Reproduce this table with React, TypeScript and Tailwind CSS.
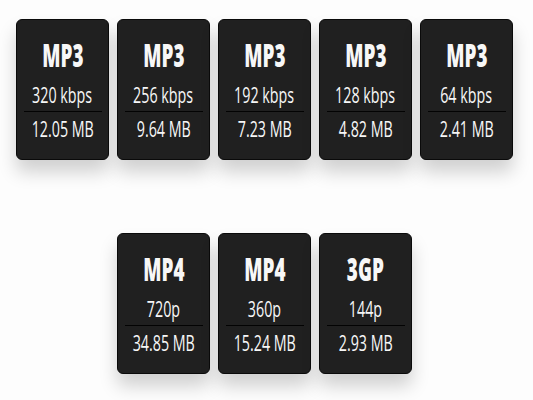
import React from 'react';

interface Format {
  type: string;
  quality: string;
  size: string;
}

const audio: Format[] = [
  { type: 'MP3', quality: '320 kbps', size: '12.05 MB' },
  { type: 'MP3', quality: '256 kbps', size: '9.64 MB' },
  { type: 'MP3', quality: '192 kbps', size: '7.23 MB' },
  { type: 'MP3', quality: '128 kbps', size: '4.82 MB' },
  { type: 'MP3', quality: '64 kbps', size: '2.41 MB' },
];

const video: Format[] = [
  { type: 'MP4', quality: '720p', size: '34.85 MB' },
  { type: 'MP4', quality: '360p', size: '15.24 MB' },
  { type: '3GP', quality: '144p', size: '2.93 MB' },
];

const FormatCard: React.FC<{ f: Format }> = ({ f }) => (
  <div className="w-[93px] h-[141px] bg-[#202020] border border-[#0a0a0a] rounded-[6px] shadow-[0_12px_18px_rgba(0,0,0,0.18)] flex flex-col items-center text-[#f7f7f7] pt-[20px]">
    <div className="h-[30px] flex items-center justify-center text-[32px] font-extrabold leading-none scale-x-[0.59] whitespace-nowrap">{f.type}</div>
    <div className="h-[30px] mt-[10px] flex items-center justify-center text-[21px] font-medium leading-none scale-x-[0.68] whitespace-nowrap">{f.quality}</div>
    <div className="w-[78px] h-px bg-[#030303] mt-[1px]" />
    <div className="h-[35px] flex items-center justify-center text-[21px] font-medium leading-none scale-x-[0.68] whitespace-nowrap">{f.size}</div>
  </div>
);

const App: React.FC = () => {
  return (
    <div className="w-[533px] h-[400px] bg-[#fdfdfd] pt-[19px] pr-[4px] flex flex-col items-center gap-[73px]" style={{ fontFamily: '"Open Sans", "Noto Sans", sans-serif' }}>
      <div className="flex gap-[8px]">
        {audio.map((f, i) => <FormatCard key={i} f={f} />)}
      </div>
      <div className="flex gap-[8px]">
        {video.map((f, i) => <FormatCard key={i} f={f} />)}
      </div>
    </div>
  );
};

export default App;
